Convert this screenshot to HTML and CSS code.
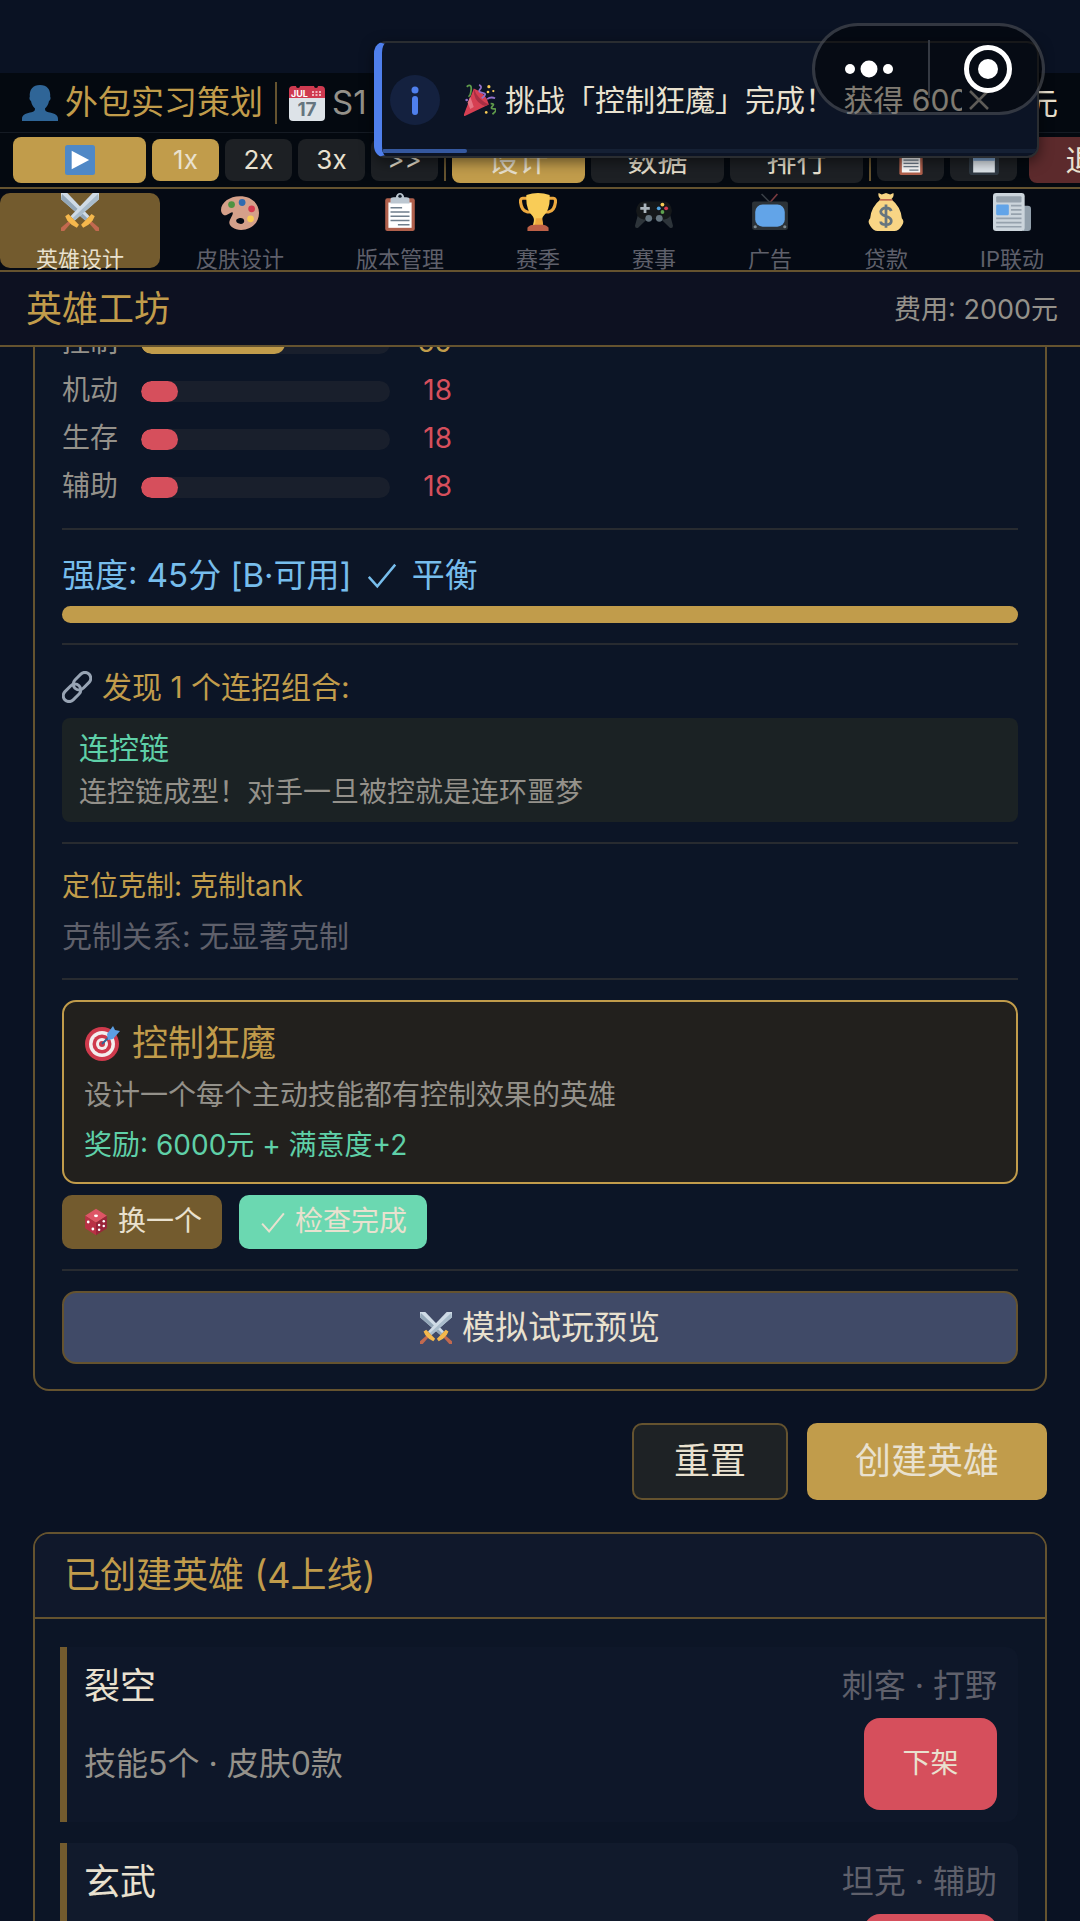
FILE: index.html
```
<!DOCTYPE html>
<html lang="zh-CN">
<head>
  <meta charset="UTF-8">
  <meta name="viewport" content="width=device-width, initial-scale=1.0">
  <title>英雄工坊</title>
  <link rel="stylesheet" href="styles.css">
</head>
<body>

  <svg class="sprite" aria-hidden="true">
    <symbol id="i-user" viewBox="0 0 36 36">
      <path fill="#2f6597" d="M0 36v-2c0-4 3-5.500 8-6.500 4-.8 5-1.500 5-4-2-1.500-3.500-4.500-4-7.500-1.500-.5-2-3-1.200-4.200C7.200 4.500 11 0 18 0s10.800 4.500 10.200 11.800c.8 1.200.3 3.700-1.200 4.200-.5 3-2 6-4 7.500 0 2.500 1 3.200 5 4 5 1 8 2.500 8 6.500v2z"/>
    </symbol>
    <symbol id="i-calendar" viewBox="0 0 36 36">
      <path fill="#dde3e8" d="M0 10h36v22a4 4 0 0 1-4 4H4a4 4 0 0 1-4-4z"/>
      <path fill="#cf3a50" d="M4 1h3a2 2 0 0 0 4 0h14a2 2 0 0 0 4 0h3a4 4 0 0 1 4 4v8H0V5a4 4 0 0 1 4-4z"/>
      <g fill="#f1b5bd"><path d="M23 6h2v2h-2zM26.500 6h2v2h-2zM30 6h2v2h-2zM23 9h2v2h-2zM26.500 9h2v2h-2zM30 9h2v2h-2z"/></g>
      <text x="2" y="11.500" font-size="9" font-weight="700" fill="#fff">JUL</text>
      <text x="18" y="31" font-size="19" font-weight="700" fill="#66757f" text-anchor="middle">17</text>
    </symbol>
    <symbol id="i-play" viewBox="0 0 36 36">
      <rect width="36" height="36" rx="3" fill="#4f88c6"/>
      <path fill="#fff" d="M8 7l21 11L8 29z"/>
    </symbol>
    <symbol id="i-swords" viewBox="0 0 36 36">
      <path fill="#cfdbe6" d="M0 0h6l21 22-4 4L0 6z"/>
      <path fill="#93a7b8" d="M1 1l24 23-2 2L0 6z"/>
      <path fill="#c2694f" d="M26 28l2-2 8 7v3h-3z"/>
      <path fill="#f5b84c" d="M19 30l10-10 3 2-2 4-4 4-5 3z"/>
      <g transform="matrix(-1 0 0 1 36 0)">
        <path fill="#cfdbe6" d="M0 0h6l21 22-4 4L0 6z"/>
        <path fill="#a9bccb" d="M1 1l24 23-2 2L0 6z"/>
        <path fill="#c2694f" d="M26 28l2-2 8 7v3h-3z"/>
        <path fill="#f5b84c" d="M19 30l10-10 3 2-2 4-4 4-5 3z"/>
      </g>
    </symbol>
    <symbol id="i-palette" viewBox="0 0 36 36">
      <path fill="#d5a08a" fill-rule="evenodd" d="M18 3c10 0 18 6 18 16S28 35 19 35c-7 0-12-4-11-8 .7-3 4-7 3-8.500C10 17 6 22 3 21 1 20 0 18 0 16 0 9 8 3 18 3zm-1 21c2.500-1 5 .5 5 2.500S20 30 17 29s-4-4 0-5z"/>
      <circle cx="10" cy="11" r="3.200" fill="#4f9342"/>
      <circle cx="20" cy="9" r="3.200" fill="#2f6bb0"/>
      <circle cx="29" cy="15" r="3.200" fill="#d63a4e"/>
      <circle cx="28" cy="24.500" r="3.200" fill="#f8cb55"/>
    </symbol>
    <symbol id="i-clipboard" viewBox="0 0 36 36">
      <rect x="4" y="5" width="28" height="31" rx="2" fill="#b0604c"/>
      <path fill="#fff" d="M7 9h22v24H7z"/>
      <path fill="#bcc7d1" d="M9 10V6q0-2 3-2h2q1-4 4-4t4 4h2q3 0 3 2v4z"/>
      <circle cx="18" cy="3" r="1.600" fill="#101a26"/>
      <path stroke="#6f7e8c" stroke-width="1.500" d="M9 14h11M9 18h18M9 22h18M9 26h18M16 30h11"/>
    </symbol>
    <symbol id="i-trophy" viewBox="0 0 36 36">
      <path fill="none" stroke="#eda93f" stroke-width="3" d="M9 5H3.500q-2.500 0-2 4 1 8 6.500 9h5M27 5h5.500q2.500 0 2 4-1 8-6.500 9h-5"/>
      <path fill="#f9cc57" d="M7 2q11-4 22 0 1 13-6 20c-2 3-1 5 0 9H13c1-4 2-6 0-9Q6 15 7 2z"/>
      <path fill="#eda93f" d="M16 24h6l1 7h-8z"/>
      <path fill="#bd6047" d="M8 36v-3q2-3 6-3h8q4 0 6 3v3z"/>
    </symbol>
    <symbol id="i-gamepad" viewBox="0 0 36 36">
      <path fill="#2d343a" d="M4 16l-4 15q0 3 3 2l8-8zM32 16l4 15q0 3-3 2l-8-8z"/>
      <path fill="#15181a" d="M9 8h18q7 0 8 9-1 7-7 8H8q-6-1-7-8 1-9 8-9z"/>
      <path stroke="#aab4bb" stroke-width="2.600" d="M5 14.500h9M9.500 10v9"/>
      <circle cx="26" cy="11" r="1.800" fill="#f8cb55"/><circle cx="22.500" cy="14.500" r="1.800" fill="#4fa3e0"/>
      <circle cx="29.500" cy="14.500" r="1.800" fill="#d63a4e"/><circle cx="26" cy="18" r="1.800" fill="#5ea34e"/>
      <circle cx="13" cy="24" r="3.200" fill="#66757f"/><circle cx="23" cy="24" r="3.200" fill="#66757f"/>
    </symbol>
    <symbol id="i-tv" viewBox="0 0 36 36">
      <path stroke="#3a4047" stroke-width="1.500" d="M10 1l8 8"/><path stroke="#7b3b40" stroke-width="1.500" d="M25 1l-7 8"/>
      <rect x="1" y="8" width="34" height="27" rx="2" fill="#2c3237"/>
      <rect x="4" y="11" width="28" height="21" rx="7" fill="#62a4e8"/>
      <circle cx="4" cy="32" r="1.500" fill="#7d8991"/><circle cx="32" cy="32" r="1.500" fill="#7d8991"/>
    </symbol>
    <symbol id="i-money" viewBox="0 0 36 36">
      <path fill="#f8d585" d="M11 0l3 1.500L18 0l4 1.500L25 0q1 3-2 6 9 7 10 18 3 3 0 7-3 5-7 5H10q-4 0-7-5-3-4 0-7Q4 13 13 6q-3-3-2-6z"/>
      <path stroke="#c0694f" stroke-width="1.600" d="M12 6.500h12"/>
      <path fill="none" stroke="#66757f" stroke-width="2.600" d="M23 17q-1-3-5-3t-5 3.500q0 3 5 4.500t5 4.500q0 3.500-5 3.500t-5-3M18 11v22"/>
    </symbol>
    <symbol id="i-news" viewBox="0 0 36 36">
      <path fill="#92a0ac" d="M28 12h5q3 0 3 3v18q0 3-3 3h-5z"/>
      <rect width="30" height="36" rx="3" fill="#ccd5dc"/>
      <rect x="3" y="3" width="24" height="6" rx="1" fill="#96a2ad"/>
      <rect x="3" y="11" width="12" height="10" rx="1" fill="#62a4e8"/>
      <path stroke="#96a2ad" stroke-width="1.600" d="M17 12h10M17 16h10M17 20h10M3 24h24M3 28h24M3 32h24"/>
    </symbol>
    <symbol id="i-popper" viewBox="0 0 36 36">
      <path fill="#d63f52" d="M11 5q14 5 17 18L1 36q-2 0-1-2z"/>
      <path fill="#a82e43" d="M11 5q4 12 17 18-4 2-7 1Q10 18 11 5z"/>
      <path fill="#e57483" d="M7 14l4 12-4 2-3-7z"/>
      <path fill="none" stroke="#9270c9" stroke-width="2" d="M17 1q4 2 1 5t3 4-1 6M26 17q4-3 9-1"/>
      <path fill="none" stroke="#5f9b4b" stroke-width="2" d="M3 3q6-4 5 4t-3 6M30 22q5 0 2 3t2 3-2 6"/>
      <g fill="#f8cb55"><circle cx="28" cy="3" r="1.800"/><circle cx="27" cy="9" r="1.500"/><circle cx="33" cy="8" r="1.300"/></g>
      <circle cx="3" cy="18" r="1.500" fill="#9270c9"/><circle cx="25" cy="32" r="1.500" fill="#f8cb55"/>
    </symbol>
    <symbol id="i-link" viewBox="0 0 36 36">
      <g fill="none" stroke="#98a4b4" stroke-width="3.600">
        <rect x="12" y="4" width="24" height="14" rx="7" transform="rotate(-45 24 11)"/>
        <rect x="0" y="18" width="24" height="14" rx="7" transform="rotate(-45 12 25)"/>
      </g>
    </symbol>
    <symbol id="i-target" viewBox="0 0 36 36">
      <circle cx="18" cy="19" r="17" fill="#cf3a4c"/><circle cx="18" cy="19" r="13" fill="#f3eeee"/>
      <circle cx="18" cy="19" r="9.500" fill="#cf3a4c"/><circle cx="18" cy="19" r="6" fill="#f3eeee"/>
      <circle cx="18" cy="19" r="3" fill="#cf3a4c"/>
      <path stroke="#2f6597" stroke-width="2" d="M18 19L30 7"/>
      <path fill="#5c9fe3" d="M23 9l6-8 2 4 5 1-7 8-5 1z"/>
    </symbol>
    <symbol id="i-die" viewBox="0 0 36 36">
      <path fill="#dd5566" d="M18 1l14 9-14 9L4 10z"/>
      <path fill="#b93145" d="M4 10l14 9v16L4 26z"/>
      <path fill="#99253a" d="M32 10l-14 9v16l14-9z"/>
      <g fill="#fff"><ellipse cx="18" cy="10" rx="2.600" ry="1.800"/><circle cx="8" cy="18" r="1.800"/><circle cx="14" cy="27" r="1.800"/><circle cx="22" cy="28" r="1.600"/><circle cx="28" cy="17" r="1.600"/><circle cx="22" cy="22" r="1.600"/><circle cx="28" cy="23" r="1.600"/></g>
    </symbol>
    <symbol id="i-save" viewBox="0 0 36 36">
      <rect width="36" height="36" rx="4" fill="#2f3943"/>
      <rect x="5" y="8" width="26" height="25" fill="#dfe6ec"/>
      <rect x="5" y="8" width="26" height="11" fill="#7fa5d0"/>
    </symbol>
    <symbol id="i-check" viewBox="0 0 36 36">
      <path fill="none" stroke="currentColor" stroke-width="2.600" d="M4 20l9 10L32 7"/>
    </symbol>
  </svg>

  <header class="topbar">
    <div class="status">
      <svg class="icon"><use href="#i-user"/></svg>
      <span class="rank">外包实习策划</span>
      <span class="sep"></span>
      <svg class="icon"><use href="#i-calendar"/></svg>
      <span class="season">S1</span>
      <span class="money">元</span>
    </div>
    <div class="controls">
      <button class="ctl wide gold" aria-label="播放"><svg class="icon small"><use href="#i-play"/></svg></button>
      <button class="ctl gold">1x</button>
      <button class="ctl">2x</button>
      <button class="ctl">3x</button>
      <button class="ctl">&gt;&gt;</button>
      <span class="sep"></span>
      <button class="ctl wide gold">设计</button>
      <button class="ctl wide">数据</button>
      <button class="ctl wide">排行</button>
      <span class="sep"></span>
      <button class="ctl" aria-label="记录"><svg class="icon small"><use href="#i-clipboard"/></svg></button>
      <button class="ctl" aria-label="存档"><svg class="icon small"><use href="#i-save"/></svg></button>
      <button class="ctl wide quit">退出</button>
    </div>
  </header>

  <nav class="tabs">
    <button class="tab active"><svg class="tab-icon"><use href="#i-swords"/></svg>英雄设计</button>
    <button class="tab"><svg class="tab-icon"><use href="#i-palette"/></svg>皮肤设计</button>
    <button class="tab"><svg class="tab-icon"><use href="#i-clipboard"/></svg>版本管理</button>
    <button class="tab"><svg class="tab-icon"><use href="#i-trophy"/></svg>赛季</button>
    <button class="tab"><svg class="tab-icon"><use href="#i-gamepad"/></svg>赛事</button>
    <button class="tab"><svg class="tab-icon"><use href="#i-tv"/></svg>广告</button>
    <button class="tab"><svg class="tab-icon"><use href="#i-money"/></svg>贷款</button>
    <button class="tab"><svg class="tab-icon"><use href="#i-news"/></svg>IP联动</button>
  </nav>

  <div class="page-head">
    <h1>英雄工坊</h1>
    <span class="cost">费用: 2000元</span>
  </div>

  <main class="content">
    <section class="card preview">
      <div class="stats">
        <div class="stat mid"><span class="label">控制</span><div class="track"><div class="fill" style="width: 58%"></div></div><span class="value">69</span></div>
        <div class="stat"><span class="label">机动</span><div class="track"><div class="fill" style="width: 15%"></div></div><span class="value">18</span></div>
        <div class="stat"><span class="label">生存</span><div class="track"><div class="fill" style="width: 15%"></div></div><span class="value">18</span></div>
        <div class="stat"><span class="label">辅助</span><div class="track"><div class="fill" style="width: 15%"></div></div><span class="value">18</span></div>
      </div>

      <div class="block">
        <p class="power">强度: 45分 [B·可用] <svg class="check"><use href="#i-check"/></svg> 平衡</p>
        <div class="power-bar"></div>
      </div>

      <div class="block">
        <p class="combo-title"><svg class="icon link"><use href="#i-link"/></svg>发现 1 个连招组合:</p>
        <div class="combo">
          <p class="combo-name">连控链</p>
          <p class="desc">连控链成型！对手一旦被控就是连环噩梦</p>
        </div>
      </div>

      <div class="block counters">
        <p class="counter-role">定位克制: 克制tank</p>
        <p class="counter-none">克制关系: 无显著克制</p>
      </div>

      <div class="block">
        <div class="challenge">
          <h2><svg class="icon"><use href="#i-target"/></svg>控制狂魔</h2>
          <p class="desc">设计一个每个主动技能都有控制效果的英雄</p>
          <p class="desc reward">奖励: 6000元 + 满意度+2</p>
        </div>
        <div class="challenge-actions">
          <button class="btn-small"><svg class="icon die"><use href="#i-die"/></svg>换一个</button>
          <button class="btn-small done"><svg class="check"><use href="#i-check"/></svg>检查完成</button>
        </div>
      </div>

      <div class="block">
        <button class="btn-simulate"><svg class="icon sim"><use href="#i-swords"/></svg>模拟试玩预览</button>
      </div>
    </section>

    <div class="actions">
      <button class="btn">重置</button>
      <button class="btn primary">创建英雄</button>
    </div>

    <section class="card">
      <h2 class="card-head">已创建英雄 (4上线)</h2>
      <div class="heroes">
        <article class="hero">
          <h3>裂空</h3>
          <span class="role">刺客 · 打野</span>
          <p class="info">技能5个 · 皮肤0款</p>
          <button class="btn-off">下架</button>
        </article>
        <article class="hero alt">
          <h3>玄武</h3>
          <span class="role">坦克 · 辅助</span>
          <p class="info">技能5个 · 皮肤0款</p>
          <button class="btn-off">下架</button>
        </article>
      </div>
    </section>
  </main>

  <div class="toast" role="status">
    <svg class="toast-info" viewBox="0 0 50 50"><circle cx="25" cy="25" r="25" fill="#14213f"/><circle cx="25" cy="15" r="3.500" fill="#4f7fec"/><path stroke="#4f7fec" stroke-width="6" stroke-linecap="round" d="M25 24v13"/></svg>
    <svg class="icon popper"><use href="#i-popper"/></svg>
    <span class="toast-text">挑战「控制狂魔」完成！ 获得 6000元</span>
    <button class="toast-close" aria-label="关闭"><svg viewBox="0 0 20 20"><path stroke="currentColor" stroke-width="2.500" d="M1 1l18 18M19 1L1 19"/></svg></button>
    <div class="toast-progress"><div class="toast-progress-fill"></div></div>
  </div>

  <div class="capsule">
    <button class="capsule-btn" aria-label="更多"><svg viewBox="0 0 50 50"><g fill="#fff"><circle cx="6" cy="25" r="5"/><circle cx="25" cy="25" r="8.500"/><circle cx="44" cy="25" r="5"/></g></svg></button>
    <span class="capsule-sep"></span>
    <button class="capsule-btn" aria-label="关闭"><svg viewBox="0 0 50 50"><circle cx="25" cy="25" r="21.500" fill="none" stroke="#fff" stroke-width="5"/><circle cx="25" cy="25" r="10" fill="#fff"/></svg></button>
  </div>

</body>
</html>
```
FILE: styles.css
```
:root {
  --gold: #c19c4b;
  --gold-dark: #735b2e;
  --line: #65532f;
  --cream: #e9e1cf;
  --grey: #94918a;
  --muted: #5f606b;
  --red: #d64f5c;
  --green: #5fd0a8;
  --bar: #040910;
}

* {
  box-sizing: border-box;
}

body {
  margin: 0;
  padding-top: 73px;
  height: 100vh;
  display: flex;
  flex-direction: column;
  overflow: hidden;
  position: relative;
  background: #0a1223;
  color: var(--cream);
  font-family: Inter, "Noto Sans CJK SC", sans-serif;
  font-size: 28px;
  line-height: 1.4;
}

h1, h2, h3, p {
  margin: 0;
  font-weight: 400;
}

button {
  border: none;
  padding: 0;
  font-family: inherit;
  line-height: inherit;
  color: inherit;
  cursor: pointer;
}

.sprite {
  position: absolute;
  width: 0;
  height: 0;
}

.icon {
  width: 36px;
  height: 36px;
  flex: none;
}

.check {
  width: 28px;
  height: 28px;
}

/* top bar */
.topbar {
  flex: none;
  background: var(--bar);
  border-bottom: 2px solid var(--line);
}

.status {
  display: flex;
  align-items: center;
  gap: 7px;
  height: 60px;
  padding: 0 22px;
  border-bottom: 1px solid #151b24;
  font-size: 33px;
}

.rank {
  color: var(--gold);
}

.sep {
  flex: none;
  width: 2px;
  height: 42px;
  margin: 0 5px;
  background: var(--line);
}

.season {
  color: var(--grey);
}

.money {
  margin-left: auto;
  font-size: 30px;
}

.controls {
  display: flex;
  align-items: center;
  gap: 6px;
  height: 54px;
  padding-left: 13px;
  overflow: hidden;
}

.controls .sep {
  margin: 0;
}

.ctl {
  flex: none;
  width: 67px;
  height: 42px;
  display: flex;
  align-items: center;
  justify-content: center;
  border-radius: 8px;
  background: #1d2024;
  font-size: 26px;
}

.ctl.wide {
  width: 133px;
  height: 46px;
  font-size: 30px;
}

.ctl.gold {
  background: var(--gold);
}

.ctl.quit {
  margin-left: 6px;
  background: #5c2a2c;
}

.icon.small {
  width: 30px;
  height: 30px;
}

/* tabs */
.tabs {
  flex: none;
  display: flex;
  padding: 4px 0 2px;
  background: #050a14;
  border-bottom: 2px solid var(--line);
}

.tab {
  flex: 1 1 auto;
  height: 75px;
  padding: 0 35px;
  display: flex;
  flex-direction: column;
  align-items: center;
  gap: 13px;
  border-radius: 10px;
  background: none;
  color: var(--muted);
  font-size: 22px;
  line-height: 30px;
  white-space: nowrap;
}

.tab.active {
  background: var(--gold-dark);
  color: var(--cream);
}

.tab-icon {
  flex: none;
  width: 38px;
  height: 38px;
}

/* page header */
.page-head {
  flex: none;
  display: flex;
  align-items: center;
  justify-content: space-between;
  height: 75px;
  padding: 2px 22px 0 26px;
  background: #0d1121;
  border-bottom: 2px solid var(--line);
}

.page-head h1 {
  color: var(--gold);
  font-size: 36px;
}

.cost {
  color: var(--grey);
  font-size: 27px;
}

/* scrolling area */
.content {
  flex: 1;
  min-height: 0;
  overflow: hidden;
  padding: 0 33px;
}

.card {
  border: 2px solid var(--line);
  border-radius: 16px;
  background: #0c1526;
  overflow: hidden;
}

/* the list is scrolled a little under the page header */
.preview {
  margin-top: -46px;
  padding: 16px 27px 5px;
}

.stats {
  padding-bottom: 17px;
}

.stat {
  display: flex;
  align-items: center;
  height: 48px;
}

.stat .label {
  width: 79px;
  color: var(--grey);
}

.track {
  width: 249px;
  height: 21px;
  border-radius: 11px;
  background: #191f2c;
  overflow: hidden;
}

.fill {
  height: 100%;
  border-radius: 11px;
  background: var(--red);
}

.value {
  width: 62px;
  text-align: right;
  color: var(--red);
}

.mid .fill {
  background: var(--gold);
}

.mid .value {
  color: var(--gold);
}

.block {
  padding: 20px 0;
  border-top: 2px solid #282b30;
}

.power {
  display: flex;
  align-items: center;
  gap: 13px;
  margin-bottom: 6px;
  color: #77bdec;
  font-size: 33px;
  line-height: 50px;
}

.power .check {
  width: 34px;
  height: 34px;
}

.power-bar {
  height: 17px;
  border-radius: 9px;
  background: var(--gold);
}

.combo-title {
  display: flex;
  align-items: center;
  gap: 10px;
  margin-bottom: 9px;
  color: var(--gold);
  font-size: 30px;
  line-height: 44px;
}

.icon.link {
  width: 30px;
  height: 32px;
}

.combo {
  padding: 8px 17px;
  border-radius: 8px;
  background: #1b2224;
  line-height: 44px;
}

.combo-name {
  color: var(--green);
  font-size: 30px;
}

.desc {
  color: var(--grey);
}

.counters {
  display: flex;
  flex-direction: column;
  gap: 6px;
  line-height: 44px;
}

.counter-role {
  color: var(--gold);
}

.counter-none {
  color: var(--muted);
  font-size: 30px;
}

.challenge {
  padding: 14px 20px 12px;
  border: 2px solid var(--gold);
  border-radius: 14px;
  background: #22201d;
  line-height: 50px;
}

.challenge h2 {
  display: flex;
  align-items: center;
  gap: 12px;
  color: var(--gold);
  font-size: 36px;
  line-height: 54px;
}

.challenge .reward {
  color: var(--green);
}

.challenge-actions {
  display: flex;
  gap: 17px;
  margin-top: 11px;
}

.btn-small {
  display: flex;
  align-items: center;
  gap: 8px;
  height: 54px;
  padding: 0 20px;
  border-radius: 10px;
  background: var(--gold-dark);
  font-size: 28px;
}

.btn-small.done {
  background: #6bd8b1;
}

.icon.die {
  width: 28px;
  height: 32px;
}

.btn-simulate {
  display: flex;
  align-items: center;
  justify-content: center;
  gap: 10px;
  width: 100%;
  height: 73px;
  border: 2px solid var(--line);
  border-radius: 14px;
  background: #404a67;
  font-size: 33px;
}

.icon.sim {
  width: 32px;
  height: 32px;
}

.actions {
  display: flex;
  justify-content: flex-end;
  gap: 19px;
  margin: 32px 0;
}

.btn {
  height: 77px;
  padding: 0 40px;
  border: 2px solid var(--line);
  border-radius: 10px;
  background: #1e2225;
  font-size: 36px;
}

.btn.primary {
  padding: 0 46px;
  background: var(--gold);
  border-color: var(--gold);
}

.card-head {
  padding: 0 29px;
  border-bottom: 2px solid var(--line);
  background: #10182b;
  color: var(--gold);
  font-size: 36px;
  line-height: 83px;
}

.heroes {
  display: flex;
  flex-direction: column;
  gap: 21px;
  padding: 28px 27px 28px 25px;
}

.hero {
  display: grid;
  grid-template-columns: 1fr auto;
  justify-items: start;
  align-items: center;
  row-gap: 7px;
  padding: 14px 21px 12px 17px;
  border-left: 7px solid var(--gold-dark);
  border-radius: 0 12px 12px 0;
  background: #0e1729;
}

.hero.alt {
  background: #111a2c;
}

.hero h3 {
  font-size: 36px;
  line-height: 50px;
}

.role {
  justify-self: end;
  color: var(--muted);
  font-size: 32px;
  line-height: 50px;
}

.info {
  color: var(--grey);
  font-size: 32px;
}

.btn-off {
  justify-self: end;
  width: 133px;
  height: 92px;
  border-radius: 16px;
  background: var(--red);
  font-size: 28px;
}

/* toast over the top bar */
.toast {
  position: absolute;
  top: 41px;
  right: 41px;
  width: 665px;
  height: 117px;
  display: flex;
  align-items: center;
  padding: 0 48px 0 8px;
  border: 2px solid #2a2d31;
  border-left: 8px solid #4f7fec;
  border-radius: 12px;
  background: #0c1425;
  box-shadow: 0 4px 14px rgba(0, 0, 0, 0.5);
  overflow: hidden;
  font-size: 30px;
}

.toast-info {
  flex: none;
  width: 50px;
  height: 50px;
  margin-right: 24px;
}

.icon.popper {
  width: 32px;
  height: 32px;
  margin-right: 9px;
}

.toast-text {
  flex: 1;
  min-width: 0;
  overflow: hidden;
  white-space: nowrap;
}

.toast-close {
  flex: none;
  display: flex;
  margin-left: 7px;
  background: none;
  color: #aaa79f;
}

.toast-close svg {
  width: 20px;
  height: 20px;
}

.toast-progress {
  position: absolute;
  left: 0;
  right: 0;
  bottom: 3px;
  height: 4px;
  background: #152034;
}

.toast-progress-fill {
  width: 13%;
  height: 100%;
  border-radius: 2px;
  background: #35589f;
}

/* mini-program capsule */
.capsule {
  position: absolute;
  top: 23px;
  right: 35px;
  width: 233px;
  height: 92px;
  display: flex;
  align-items: center;
  gap: 4px;
  border: 3px solid rgba(120, 125, 135, 0.4);
  border-radius: 46px;
  background: rgba(0, 0, 0, 0.45);
}

.capsule-btn {
  flex: 1;
  display: flex;
  justify-content: center;
  background: none;
}

.capsule-btn svg {
  width: 50px;
  height: 50px;
}

.capsule-sep {
  width: 2px;
  height: 58px;
  background: #353a43;
}
```
